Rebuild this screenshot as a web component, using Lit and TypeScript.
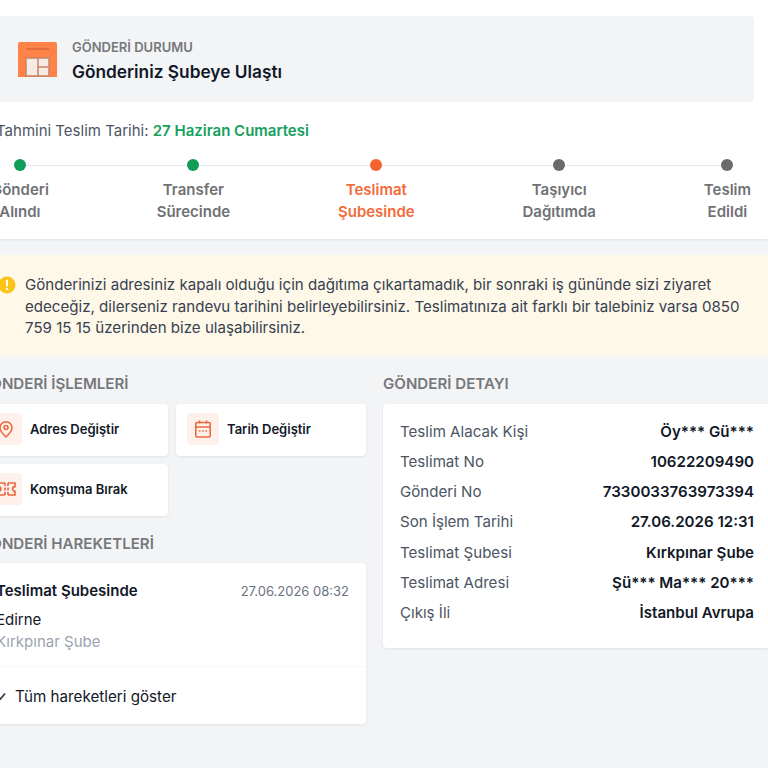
import { LitElement, html, css, svg } from 'lit';
import { customElement } from 'lit/decorators.js';

const steps = [
  { a: 'Gönderi', b: 'Alındı', state: 'done' },
  { a: 'Transfer', b: 'Sürecinde', state: 'done' },
  { a: 'Teslimat', b: 'Şubesinde', state: 'current' },
  { a: 'Taşıyıcı', b: 'Dağıtımda', state: '' },
  { a: 'Teslim', b: 'Edildi', state: '' },
];

const details = [
  ['Teslim Alacak Kişi', 'Öy*** Gü***'],
  ['Teslimat No', '10622209490'],
  ['Gönderi No', '7330033763973394'],
  ['Son İşlem Tarihi', '27.06.2026 12:31'],
  ['Teslimat Şubesi', 'Kırkpınar Şube'],
  ['Teslimat Adresi', 'Şü*** Ma*** 20***'],
  ['Çıkış İli', 'İstanbul Avrupa'],
];

const pinIcon = svg`<path d="M10 18c-3.600-3.400-6-6.200-6-9.200a6 6 0 0 1 12 0c0 3-2.400 5.800-6 9.200z" fill="none" stroke="currentColor" stroke-width="1.600" stroke-linejoin="round"/><circle cx="10" cy="8.500" r="2" fill="none" stroke="currentColor" stroke-width="1.600"/>`;
const calendarIcon = svg`<rect x="2.800" y="3.500" width="14.400" height="14.500" rx="1.200" fill="none" stroke="currentColor" stroke-width="1.600"/><path d="M2.800 8h14.400M6.500 1.500v3M13.500 1.500v3M6 12h1.600M9.200 12h1.600M12.400 12h1.600" fill="none" stroke="currentColor" stroke-width="1.600"/>`;
const neighborIcon = svg`<path d="M9 4H2.500v3.600a2.400 2.400 0 0 1 0 4.800V16H9M12 4h7v3.600a2.400 2.400 0 0 0 0 4.800V16h-7M9 4v3M9 8.500v3M9 13v3M12 4v3M12 8.500v3M12 13v3" fill="none" stroke="currentColor" stroke-width="1.700"/>`;

@customElement('app-root')
export class AppRoot extends LitElement {
  static styles = css`
    :host {
      display: block;
      height: 768px;
      overflow: hidden;
      background: #f3f4f6;
      font-family: Inter, 'Noto Sans', sans-serif;
      color: #111827;
    }
    .page {
      width: 791px;
      margin-left: -21px;
    }
    .top {
      background: #fff;
      padding: 16px 16px 0 17px;
      height: 239px;
      box-sizing: border-box;
      box-shadow: 0 1px 3px rgba(0, 0, 0, 0.08);
    }
    .status {
      height: 86px;
      background: #f3f4f6;
      border-radius: 4px;
      display: flex;
      align-items: center;
      gap: 15px;
      padding-left: 22px;
    }
    .status-label {
      font-size: 13px;
      font-weight: 600;
      line-height: 16px;
      margin-top: 3px;
      color: #76787c;
    }
    .status-title {
      font-size: 17.300px;
      font-weight: 600;
      line-height: 22px;
      margin-top: 6px;
    }
    .eta {
      font-size: 15px;
      line-height: 20px;
      margin-top: 19px;
      color: #4b5563;
    }
    .eta b {
      font-weight: 600;
      color: #16a05d;
    }
    .steps {
      position: relative;
      display: flex;
      justify-content: space-between;
      margin: 18px 3px 0 -5px;
      font-size: 15px;
      font-weight: 600;
      line-height: 22px;
      color: #6f7175;
      text-align: center;
    }
    .line {
      position: absolute;
      left: 30px;
      right: 24px;
      top: 6px;
      height: 1px;
      background: #e5e7eb;
    }
    .step {
      position: relative;
      display: flex;
      flex-direction: column;
      align-items: center;
    }
    .dot {
      width: 12px;
      height: 12px;
      border-radius: 50%;
      background: #6b6b6b;
      margin-bottom: 8px;
    }
    .done .dot {
      background: #0f9d58;
    }
    .current {
      color: #f26b3a;
    }
    .current .dot {
      background: #f26430;
    }
    .notice {
      margin-top: 16px;
      height: 101px;
      box-sizing: border-box;
      background: #fef8e8;
      display: flex;
      gap: 9px;
      padding: 19px 22px 0 19px;
      font-size: 15.100px;
      line-height: 21.500px;
      color: #374151;
    }
    .notice svg {
      flex: none;
      margin-top: 2px;
    }
    .columns {
      display: grid;
      grid-template-columns: 387px 387px;
      gap: 17px;
      margin-top: 18px;
    }
    h2 {
      margin: 0 0 9.500px;
      font-size: 15.100px;
      font-weight: 600;
      line-height: 20px;
      color: #76787c;
    }
    .actions {
      display: grid;
      grid-template-columns: 189px 190px;
      gap: 8px;
      margin-bottom: 18px;
    }
    .action {
      height: 52px;
      box-sizing: border-box;
      padding: 0 0 1px 11px;
      background: #fff;
      border-radius: 4px;
      box-shadow: 0 1px 3px rgba(0, 0, 0, 0.08);
      display: flex;
      align-items: center;
      gap: 8px;
      font-size: 13px;
      font-weight: 600;
    }
    .action-icon {
      width: 32px;
      height: 32px;
      border-radius: 4px;
      background: #fef1ec;
      color: #ea6a40;
      display: flex;
      align-items: center;
      justify-content: center;
    }
    .card {
      background: #fff;
      border-radius: 4px;
      box-shadow: 0 1px 3px rgba(0, 0, 0, 0.08);
    }
    .move {
      padding: 18px 17px 0 17px;
      height: 104px;
      border-bottom: 1px solid #f7f8f9;
      box-sizing: border-box;
    }
    .move-head {
      display: flex;
      justify-content: space-between;
      font-size: 15px;
      font-weight: 600;
      line-height: 20px;
    }
    .move-head span {
      font-size: 13px;
      font-weight: 400;
      color: #6b7280;
    }
    .move-city {
      font-size: 15px;
      line-height: 22px;
      margin-top: 8px;
    }
    .move-branch {
      font-size: 15px;
      line-height: 22px;
      color: #9ca3af;
    }
    .more {
      height: 57px;
      box-sizing: border-box;
      display: flex;
      align-items: center;
      gap: 7px;
      padding: 1px 0 0 17px;
      font-size: 15.200px;
    }
    .detail {
      padding: 13px 16px 19px 17px;
    }
    .row {
      display: flex;
      justify-content: space-between;
      font-size: 15.100px;
      line-height: 30.300px;
      color: #4b5563;
    }
    .row b {
      font-weight: 600;
      color: #111827;
    }
  `;

  render() {
    return html`
      <div class="page">
        <section class="top">
          <div class="status">
            <svg width="39" height="35" viewBox="0 0 39 35">
              <path d="M0 2a2 2 0 0 1 2-2h35a2 2 0 0 1 2 2v33H0z" fill="#ff8347" />
              <path d="M8 7h23" stroke="#d9673a" stroke-width="1.500" />
              <rect x="8" y="16" width="23" height="18" fill="#f5ebe4" />
              <path d="M8 16h23v18H8zM20 16v18M20 25h11" fill="none" stroke="#c98468" stroke-width="1.500" />
            </svg>
            <div>
              <div class="status-label">GÖNDERİ DURUMU</div>
              <div class="status-title">Gönderiniz Şubeye Ulaştı</div>
            </div>
          </div>
          <div class="eta">Tahmini Teslim Tarihi: <b>27 Haziran Cumartesi</b></div>
          <div class="steps">
            <div class="line"></div>
            ${steps.map(
              s => html`<div class="step ${s.state}">
                <div class="dot"></div>
                <div>${s.a}</div>
                <div>${s.b}</div>
              </div>`
            )}
          </div>
        </section>
        <div class="notice">
          <svg width="18" height="18" viewBox="0 0 18 18">
            <circle cx="9" cy="9" r="8.500" fill="#fcc419" />
            <path d="M9 4.500v5" stroke="#fff" stroke-width="2" stroke-linecap="round" />
            <circle cx="9" cy="13" r="1.200" fill="#fff" />
          </svg>
          <div>Gönderinizi adresiniz kapalı olduğu için dağıtıma çıkartamadık, bir sonraki iş gününde sizi ziyaret edeceğiz, dilerseniz randevu tarihini belirleyebilirsiniz. Teslimatınıza ait farklı bir talebiniz varsa 0850 759 15 15 üzerinden bize ulaşabilirsiniz.</div>
        </div>
        <div class="columns">
          <div>
            <h2>GÖNDERİ İŞLEMLERİ</h2>
            <div class="actions">
              ${this.action(pinIcon, 'Adres Değiştir')}
              ${this.action(calendarIcon, 'Tarih Değiştir')}
              ${this.action(neighborIcon, 'Komşuma Bırak')}
            </div>
            <h2>GÖNDERİ HAREKETLERİ</h2>
            <div class="card">
              <div class="move">
                <div class="move-head">Teslimat Şubesinde<span>27.06.2026 08:32</span></div>
                <div class="move-city">Edirne</div>
                <div class="move-branch">Kırkpınar Şube</div>
              </div>
              <div class="more">
                <svg width="12" height="12" viewBox="0 0 12 12">
                  <path d="M2 6.500l2.500 2.500 4.500-5.500" fill="none" stroke="#374151" stroke-width="1.800" />
                </svg>
                Tüm hareketleri göster
              </div>
            </div>
          </div>
          <div>
            <h2>GÖNDERİ DETAYI</h2>
            <div class="card detail">
              ${details.map(d => html`<div class="row"><span>${d[0]}</span><b>${d[1]}</b></div>`)}
            </div>
          </div>
        </div>
      </div>
    `;
  }

  action(icon: unknown, label: string) {
    return html`<div class="action">
      <div class="action-icon"><svg width="20" height="20" viewBox="0 0 20 20">${icon}</svg></div>
      ${label}
    </div>`;
  }
}
